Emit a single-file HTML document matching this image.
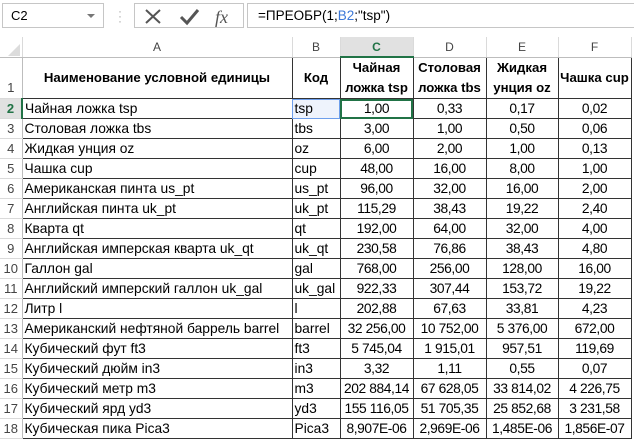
<!DOCTYPE html>
<html><head><meta charset="utf-8"><style>
*{margin:0;padding:0;box-sizing:border-box}
body{width:634px;height:439px;overflow:hidden;background:#fff;font-family:"Liberation Sans","DejaVu Sans",sans-serif;position:relative}
.box{position:absolute;border:1px solid #c6c6c6;background:#fff}
table{position:absolute;left:0;top:37px;border-collapse:collapse;table-layout:fixed;font-size:13.8px;color:#000}
td{height:20px;padding:0 2px;white-space:nowrap;overflow:hidden;border:1px solid #333;line-height:18px}
td.rh{border:none;border-right:1px solid #bdbdbd;border-bottom:1px solid #dadada;text-align:center;color:#444;font-size:13px;vertical-align:bottom;padding:0}
tr.ch td{border:none;border-right:1px solid #dadada;border-bottom:1px solid #bdbdbd;text-align:center;color:#444;font-size:12px;height:20px}
tr.ch td.sel{background:#e1e1e1;color:#217346;font-weight:bold;border-bottom:2px solid #217346}
td.rh.sel{background:#e1e1e1;color:#217346;font-weight:bold;border-right:2px solid #217346}
td.n{text-align:center;padding:0;letter-spacing:-0.4px}
tr.h td{height:40px;font-weight:bold;text-align:center;white-space:normal;line-height:20px;font-size:13.2px;padding:0 1px}
</style></head><body>
<div class="box" style="left:2px;top:3px;width:102px;height:25px;font-size:13px;line-height:23px;padding-left:8px">C2<span style="position:absolute;right:8px;top:10px;width:0;height:0;border-left:4px solid transparent;border-right:4px solid transparent;border-top:4px solid #777"></span></div>
<div style="position:absolute;left:118px;top:9px;color:#aaa;font-size:12px;line-height:5px">·<br>·<br>·</div>
<div class="box" style="left:134px;top:3px;width:110px;height:25px">
<svg width="110" height="25" style="position:absolute;left:0;top:0"><path d="M11 6 L25 19 M25 6 L11 19" stroke="#555" stroke-width="2"/><path d="M46 13 L52 19 L63 6" stroke="#555" stroke-width="3" fill="none"/><text x="80" y="19" font-family="Liberation Serif,serif" font-style="italic" font-size="18" fill="#555">fx</text></svg></div>
<div class="box" style="left:247px;top:3px;width:390px;height:25px;font-size:13.5px;line-height:23px;padding-left:10px">=ПРЕОБР(1;<span style="color:#3c78d8">B2</span>;"tsp")</div>
<svg style="position:absolute;left:6px;top:42px" width="14" height="14"><path d="M14 2 L14 14 L2 14 Z" fill="#dcdcdc"/></svg>
<table>
<colgroup><col style="width:22px"><col style="width:270px"><col style="width:48px"><col style="width:73px"><col style="width:73px"><col style="width:72px"><col style="width:73px"></colgroup>
<tr class="ch"><td></td><td>A</td><td>B</td><td class="sel">C</td><td>D</td><td>E</td><td>F</td></tr>
<tr class="h"><td class="rh" style="font-weight:normal">1</td><td>Наименование условной единицы</td><td>Код</td><td>Чайная ложка tsp</td><td>Столовая ложка tbs</td><td>Жидкая унция oz</td><td>Чашка cup</td></tr>
<tr><td class="rh sel">2</td><td>Чайная ложка tsp</td><td style="background:#eef3fc;outline:1px solid #6d9eeb;outline-offset:-1px">tsp</td><td class="n" style="outline:2px solid #217346;outline-offset:-2px">1,00</td><td class="n">0,33</td><td class="n">0,17</td><td class="n">0,02</td></tr>
<tr><td class="rh">3</td><td>Столовая ложка tbs</td><td>tbs</td><td class="n">3,00</td><td class="n">1,00</td><td class="n">0,50</td><td class="n">0,06</td></tr>
<tr><td class="rh">4</td><td>Жидкая унция oz</td><td>oz</td><td class="n">6,00</td><td class="n">2,00</td><td class="n">1,00</td><td class="n">0,13</td></tr>
<tr><td class="rh">5</td><td>Чашка cup</td><td>cup</td><td class="n">48,00</td><td class="n">16,00</td><td class="n">8,00</td><td class="n">1,00</td></tr>
<tr><td class="rh">6</td><td>Американская пинта us_pt</td><td>us_pt</td><td class="n">96,00</td><td class="n">32,00</td><td class="n">16,00</td><td class="n">2,00</td></tr>
<tr><td class="rh">7</td><td>Английская пинта uk_pt</td><td>uk_pt</td><td class="n">115,29</td><td class="n">38,43</td><td class="n">19,22</td><td class="n">2,40</td></tr>
<tr><td class="rh">8</td><td>Кварта qt</td><td>qt</td><td class="n">192,00</td><td class="n">64,00</td><td class="n">32,00</td><td class="n">4,00</td></tr>
<tr><td class="rh">9</td><td>Английская имперская кварта uk_qt</td><td>uk_qt</td><td class="n">230,58</td><td class="n">76,86</td><td class="n">38,43</td><td class="n">4,80</td></tr>
<tr><td class="rh">10</td><td>Галлон gal</td><td>gal</td><td class="n">768,00</td><td class="n">256,00</td><td class="n">128,00</td><td class="n">16,00</td></tr>
<tr><td class="rh">11</td><td>Английский имперский галлон uk_gal</td><td>uk_gal</td><td class="n">922,33</td><td class="n">307,44</td><td class="n">153,72</td><td class="n">19,22</td></tr>
<tr><td class="rh">12</td><td>Литр l</td><td>l</td><td class="n">202,88</td><td class="n">67,63</td><td class="n">33,81</td><td class="n">4,23</td></tr>
<tr><td class="rh">13</td><td>Американский нефтяной баррель barrel</td><td>barrel</td><td class="n">32 256,00</td><td class="n">10 752,00</td><td class="n">5 376,00</td><td class="n">672,00</td></tr>
<tr><td class="rh">14</td><td>Кубический фут ft3</td><td>ft3</td><td class="n">5 745,04</td><td class="n">1 915,01</td><td class="n">957,51</td><td class="n">119,69</td></tr>
<tr><td class="rh">15</td><td>Кубический дюйм in3</td><td>in3</td><td class="n">3,32</td><td class="n">1,11</td><td class="n">0,55</td><td class="n">0,07</td></tr>
<tr><td class="rh">16</td><td>Кубический метр m3</td><td>m3</td><td class="n">202 884,14</td><td class="n">67 628,05</td><td class="n">33 814,02</td><td class="n">4 226,75</td></tr>
<tr><td class="rh">17</td><td>Кубический ярд yd3</td><td>yd3</td><td class="n">155 116,05</td><td class="n">51 705,35</td><td class="n">25 852,68</td><td class="n">3 231,58</td></tr>
<tr><td class="rh">18</td><td>Кубическая пика Pica3</td><td>Pica3</td><td class="n">8,907E-06</td><td class="n">2,969E-06</td><td class="n">1,485E-06</td><td class="n">1,856E-07</td></tr>
</table>
</body></html>
